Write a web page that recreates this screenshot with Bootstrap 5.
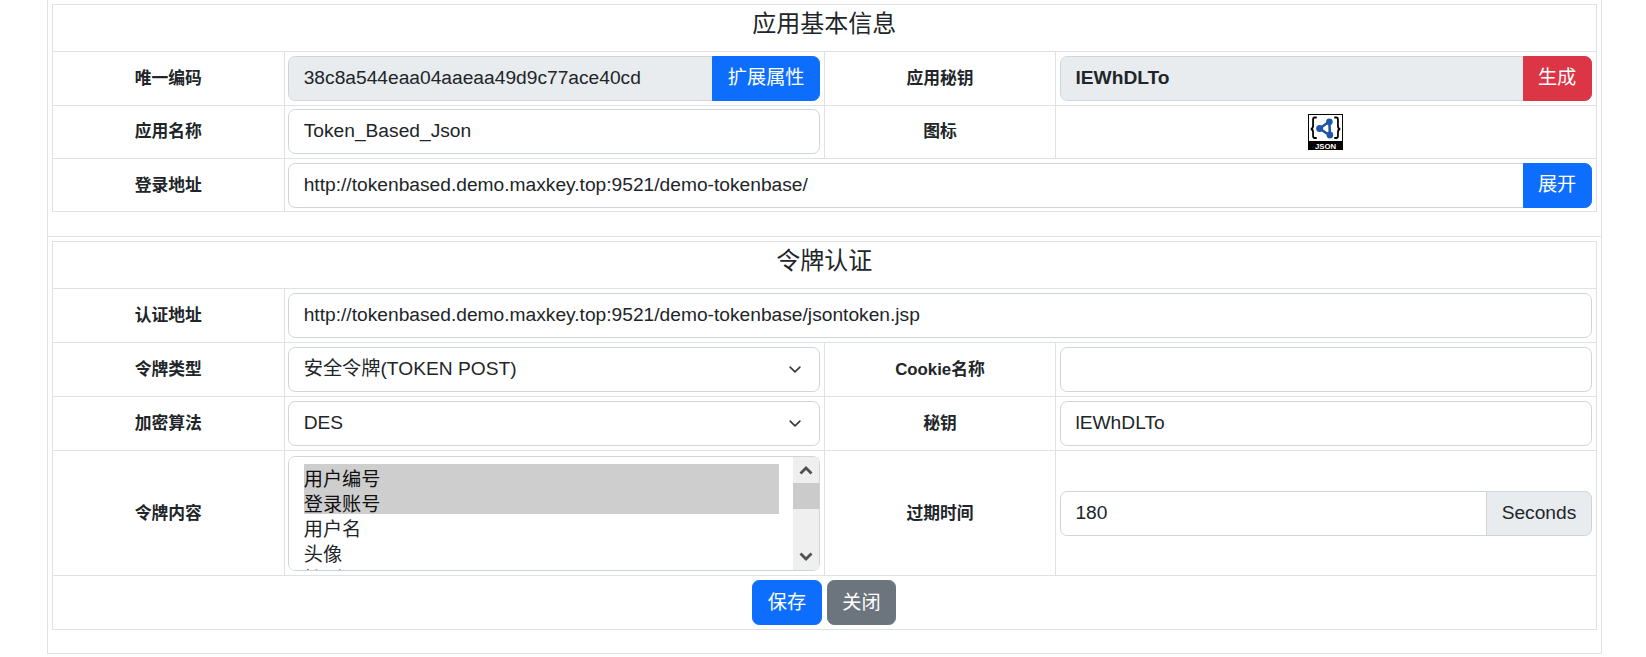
<!DOCTYPE html>
<html lang="zh">
<head>
<meta charset="utf-8">
<title>应用基本信息</title>
<link href="https://cdn.jsdelivr.net/npm/bootstrap@5.3.0/dist/css/bootstrap.min.css" rel="stylesheet">
<style>
html{font-size:19.2px}
body{font-family:"Liberation Sans","Noto Sans CJK SC",sans-serif;color:#212529;background:#fff}
.sheet{margin-left:47px;width:1555px;border:1px solid #dee2e6;padding:4px 4.5px 23px 4px}
.sheet-first{border-top:0;border-bottom:0;padding-top:4px;padding-bottom:23.5px}
.form-tbl{table-layout:fixed;width:100%;margin:0}
.form-tbl col.lab{width:15%}
.form-tbl col.val{width:35%}
.form-tbl>tbody>tr>td{padding:3.9px 3.8px;vertical-align:middle;border-color:#dee2e6}
.sheet-first .form-tbl>tbody>tr>td{padding-top:3.6px;padding-bottom:3.6px}
.form-tbl>tbody>tr>td.lab-cell{text-align:center;font-weight:700;font-size:16.8px}
.form-tbl>tbody>tr>td.title-cell{padding:5px 4.8px 3px;text-align:center}
.sheet-first .form-tbl>tbody>tr>td.title-cell{padding:4.7px 4.8px 3.2px}
.form-control,.form-select{border-color:#ced4da}
.form-control[readonly]{background-color:#e9ecef}
.input-group-text{background-color:#e9ecef;border-color:#ced4da}
.form-select{background-position:right 15px center;background-size:18px 13px}
.strong-val{font-weight:700}
.list-wrap{position:relative;margin:.6px 0}
select.token-list{height:115.4px;padding:7px 0 0 14.4px;background-image:none}
select.token-list option{padding:0;width:475px;height:25px;min-height:25px;line-height:25px;overflow:hidden}
.fake-bar{position:absolute;top:1px;right:1px;bottom:1px;width:26px;background:#efefef;display:flex;flex-direction:column}
.fake-btn{height:26px;display:flex;align-items:center;justify-content:center}
.fake-thumb{height:26px;background:#cbcbcb}
.fake-space{flex:1 1 auto}
.app-icon{display:block;margin:0 auto}
</style>
</head>
<body>
<div class="sheet sheet-first">
<table class="table table-bordered form-tbl">
<colgroup><col class="lab"><col class="val"><col class="lab"><col class="val"></colgroup>
<tbody>
<tr><td colspan="4" class="title-cell"><h5 class="fw-normal">应用基本信息</h5></td></tr>
<tr>
<td class="lab-cell">唯一编码</td>
<td><div class="input-group"><input class="form-control" readonly value="38c8a544eaa04aaeaa49d9c77ace40cd"><button type="button" class="btn btn-primary">扩展属性</button></div></td>
<td class="lab-cell">应用秘钥</td>
<td><div class="input-group"><input class="form-control strong-val" readonly value="lEWhDLTo"><button type="button" class="btn btn-danger">生成</button></div></td>
</tr>
<tr>
<td class="lab-cell">应用名称</td>
<td><input class="form-control" value="Token_Based_Json"></td>
<td class="lab-cell">图标</td>
<td>
<svg class="app-icon" width="35" height="36" viewBox="0 0 36 36" preserveAspectRatio="none" role="img" aria-label="JSON">
<rect x=".5" y=".5" width="35" height="35" fill="#fff" stroke="#000"/>
<rect x="0" y="27" width="36" height="9" fill="#000"/>
<path d="M9 3.500H7Q5.200 3.500 5.200 5.500v6.500Q5.200 14.500 3 15q2.200.5 2.200 3v4q0 2 1.800 2h2M27 3.500h2q1.800 0 1.800 2v6.500q0 2.500 2.200 3-2.200.5-2.200 3v4q0 2-1.800 2h-2" fill="none" stroke="#000" stroke-width="1.800"/>
<path d="M22 7.500 12 14.500 22.500 21.500Z" fill="none" stroke="#1f56a8" stroke-width="2.600"/>
<circle cx="22" cy="7.800" r="3.400" fill="#1f56a8"/><circle cx="12" cy="14.500" r="3.600" fill="#1f56a8"/><circle cx="22.500" cy="21" r="3.400" fill="#1f56a8"/>
<text x="18" y="34.800" text-anchor="middle" fill="#fff" font-family="Liberation Sans" font-size="8" font-weight="700">JSON</text>
</svg>
</td>
</tr>
<tr>
<td class="lab-cell">登录地址</td>
<td colspan="3"><div class="input-group"><input class="form-control" value="http://tokenbased.demo.maxkey.top:9521/demo-tokenbase/"><button type="button" class="btn btn-primary">展开</button></div></td>
</tr>
</tbody>
</table>
</div>
<div class="sheet">
<table class="table table-bordered form-tbl">
<colgroup><col class="lab"><col class="val"><col class="lab"><col class="val"></colgroup>
<tbody>
<tr><td colspan="4" class="title-cell"><h5 class="fw-normal">令牌认证</h5></td></tr>
<tr>
<td class="lab-cell">认证地址</td>
<td colspan="3"><input class="form-control" value="http://tokenbased.demo.maxkey.top:9521/demo-tokenbase/jsontoken.jsp"></td>
</tr>
<tr>
<td class="lab-cell">令牌类型</td>
<td><select class="form-select"><option>安全令牌(TOKEN POST)</option></select></td>
<td class="lab-cell">Cookie名称</td>
<td><input class="form-control" value=""></td>
</tr>
<tr>
<td class="lab-cell">加密算法</td>
<td><select class="form-select"><option>DES</option></select></td>
<td class="lab-cell">秘钥</td>
<td><input class="form-control" value="lEWhDLTo"></td>
</tr>
<tr>
<td class="lab-cell">令牌内容</td>
<td><div class="list-wrap"><select class="form-select token-list" multiple>
<option selected>用户编号</option><option selected>登录账号</option><option>用户名</option><option>头像</option><option>性别</option><option>邮箱</option><option>手机</option><option>部门</option><option>职位</option><option>工号</option><option>地址</option><option>组织</option>
</select>
<div class="fake-bar" aria-hidden="true">
<div class="fake-btn"><svg width="14" height="10" viewBox="0 0 14 10"><path d="M1.500 8.500 7 3l5.500 5.500" fill="none" stroke="#505050" stroke-width="2.800"/></svg></div>
<div class="fake-thumb"></div>
<div class="fake-space"></div>
<div class="fake-btn"><svg width="14" height="10" viewBox="0 0 14 10"><path d="M1.500 1.500 7 7l5.500-5.500" fill="none" stroke="#505050" stroke-width="2.800"/></svg></div>
</div></div></td>
<td class="lab-cell">过期时间</td>
<td><div class="input-group"><input class="form-control" value="180"><span class="input-group-text">Seconds</span></div></td>
</tr>
<tr>
<td colspan="4" class="text-center"><button type="button" class="btn btn-primary">保存</button> <button type="button" class="btn btn-secondary">关闭</button></td>
</tr>
</tbody>
</table>
</div>
<script src="https://cdn.jsdelivr.net/npm/bootstrap@5.3.0/dist/js/bootstrap.bundle.min.js"></script>
</body>
</html>
